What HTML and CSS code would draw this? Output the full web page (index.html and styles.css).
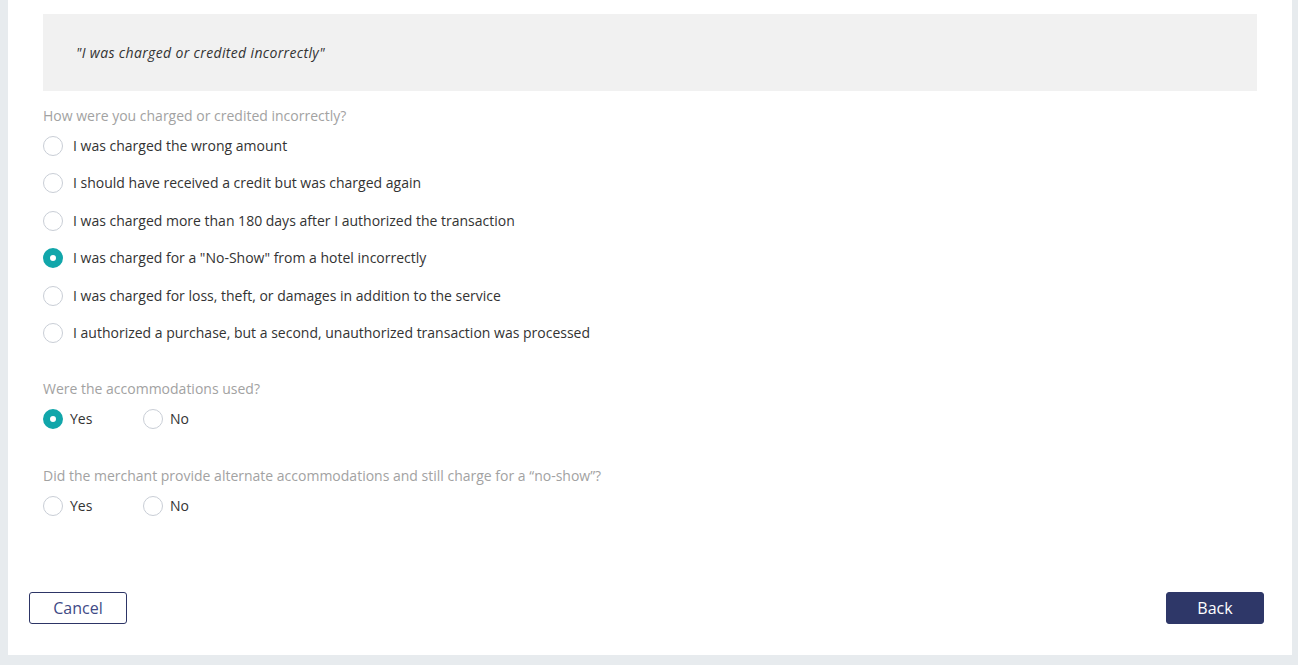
FILE: index.html
```html
<!DOCTYPE html>
<html lang="en">
<head>
    <meta charset="UTF-8">
    <title>Dispute - Charged incorrectly</title>
    <link rel="stylesheet" href="styles.css">
</head>
<body>

<div class="panel">
    <div class="content">
        <!-- Selected reason -->
        <div class="reason">
            <em>"I was charged or credited incorrectly"</em>
        </div>

        <div class="question">
            <p class="question-label">How were you charged or credited incorrectly?</p>
            <div class="options">
                <label class="radio"><span class="dot"></span>I was charged the wrong amount</label>
                <label class="radio"><span class="dot"></span>I should have received a credit but was charged again</label>
                <label class="radio"><span class="dot"></span>I was charged more than 180 days after I authorized the transaction</label>
                <label class="radio"><span class="dot checked"></span>I was charged for a "No-Show" from a hotel incorrectly</label>
                <label class="radio"><span class="dot"></span>I was charged for loss, theft, or damages in addition to the service</label>
                <label class="radio"><span class="dot"></span>I authorized a purchase, but a second, unauthorized transaction was processed</label>
            </div>
        </div>

        <div class="question">
            <p class="question-label">Were the accommodations used?</p>
            <div class="yes-no">
                <label class="radio short"><span class="dot checked"></span>Yes</label>
                <label class="radio short"><span class="dot"></span>No</label>
            </div>
        </div>

        <div class="question">
            <p class="question-label">Did the merchant provide alternate accommodations and still charge for a &ldquo;no-show&rdquo;?</p>
            <div class="yes-no">
                <label class="radio short"><span class="dot"></span>Yes</label>
                <label class="radio short"><span class="dot"></span>No</label>
            </div>
        </div>
    </div>

    <div class="actions">
        <button class="btn btn-outline">Cancel</button>
        <button class="btn btn-primary">Back</button>
    </div>
</div>

</body>
</html>
```

FILE: styles.css
```css
body {
    margin: 0;
    background-color: #e7ebee;
    font-family: "Open Sans", Arial, sans-serif;
    font-size: 14px;
    color: #333;
}
.panel {
    margin: 0 6px 0 8px;
    height: 655px;
    background-color: #fff;
    display: flex;
    flex-direction: column;
    box-sizing: border-box;
}
.content {
    padding: 14px 35px 0 35px;
    flex: 1;
}
.reason {
    background-color: #f1f1f1;
    height: 77px;
    display: flex;
    align-items: center;
    padding-left: 33px;
    font-size: 14px;
    color: #333;
}
.reason em {
    letter-spacing: 0.35px;
}
.question-label {
    margin: 15px 0 11px;
    color: #a2a2a2;
    line-height: 19px;
}
.options {
    display: flex;
    flex-direction: column;
    gap: 17.4px;
}
.radio {
    display: flex;
    align-items: center;
    gap: 10px;
    line-height: 20px;
    cursor: pointer;
}
.dot {
    width: 20px;
    height: 20px;
    border-radius: 50%;
    border: 1px solid #c9ced6;
    box-sizing: border-box;
    background-color: #fff;
    flex-shrink: 0;
}
.dot.checked {
    border: 7px solid #11a6aa;
}
.radio.short {
    gap: 7px;
    width: 100px;
}
.yes-no {
    display: flex;
}
.question + .question {
    margin-top: 36.5px;
}
.question + .question .question-label {
    margin-bottom: 11px;
}
.actions {
    display: flex;
    justify-content: space-between;
    padding: 0 28px 31px 21px;
}
.btn {
    width: 98px;
    height: 32px;
    border-radius: 3px;
    font-family: "Open Sans", Arial, sans-serif;
    font-size: 16px;
    cursor: pointer;
}
.btn-outline {
    background-color: #fff;
    border: 1px solid #2d3566;
    color: #3f4a86;
}
.btn-primary {
    background-color: #2e3768;
    border: 1px solid #2e3768;
    color: #fff;
}
```
